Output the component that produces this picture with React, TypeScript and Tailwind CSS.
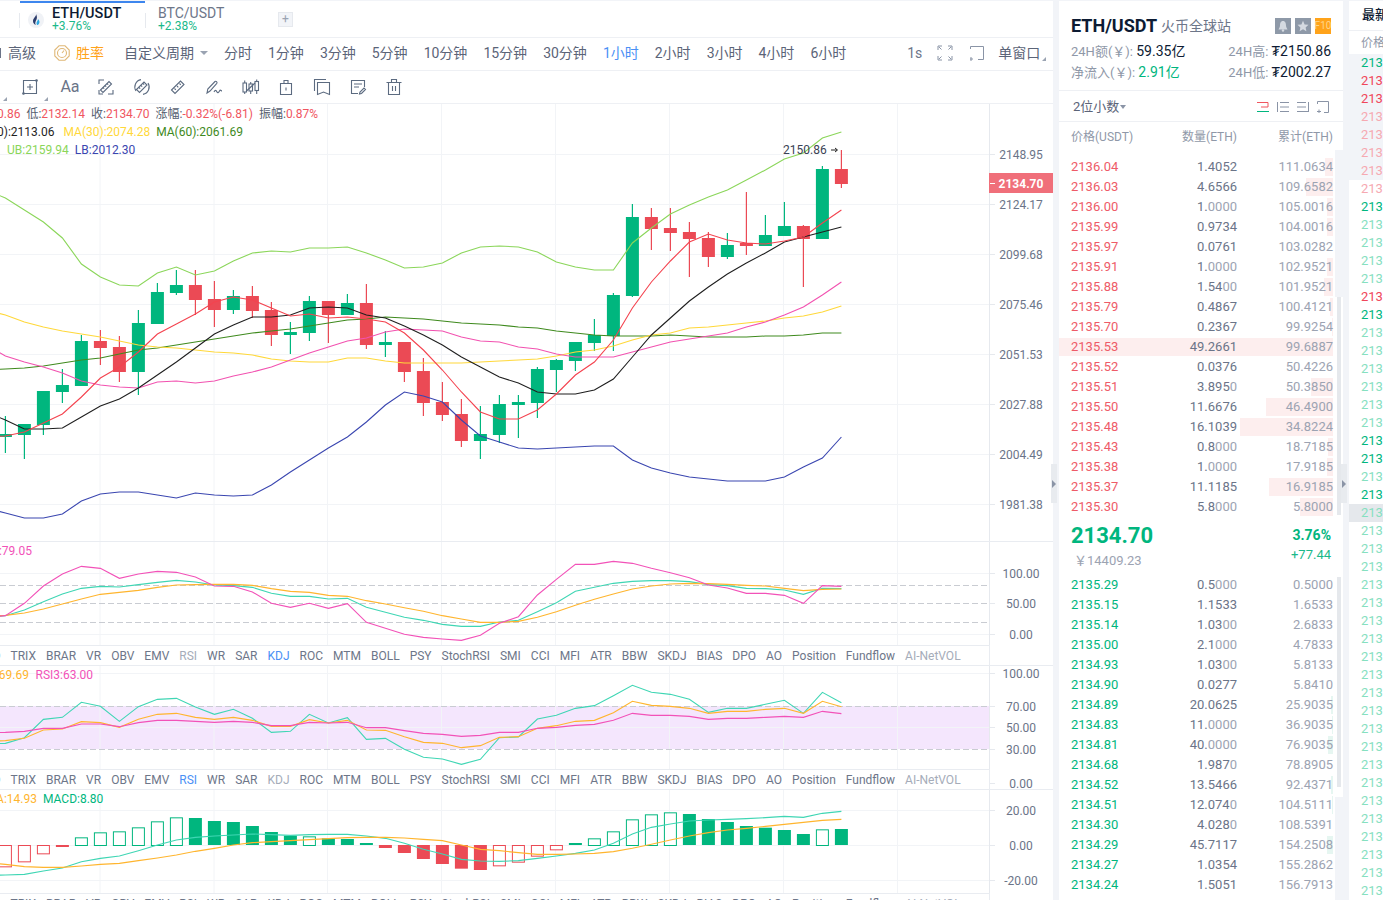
import React from "react";

const GREEN = "#00b67e";
const RED = "#eb4a55";

// x of candle i on the chart
const cx = (i: number) => 5.4 + 19 * i;

// [green?, wickTop, wickBottom, bodyTop, bodyBottom]
const candles: [number, number, number, number, number][] = [
  [1, 416, 453, 434, 437], [1, 424, 459, 424, 435], [1, 391, 435, 391, 425], [1, 369, 403, 385, 392],
  [1, 335, 386, 341, 386], [0, 330, 365, 341, 348], [0, 336, 382, 347, 372], [1, 310, 395, 323, 372],
  [1, 283, 324, 292, 324], [1, 270, 295, 285, 293], [0, 270, 315, 285, 300], [0, 281, 327, 299, 310],
  [1, 290, 314, 296, 310], [0, 286, 318, 296, 311], [0, 302, 346, 310, 335], [1, 322, 354, 332, 335],
  [1, 296, 341, 301, 333], [0, 301, 343, 301, 315], [1, 294, 315, 303, 315], [0, 284, 349, 303, 345],
  [1, 331, 357, 342, 345], [0, 342, 382, 342, 372], [0, 358, 416, 371, 403], [0, 382, 421, 402, 415],
  [0, 399, 447, 414, 441], [1, 406, 459, 434, 441], [1, 395, 443, 404, 435], [1, 395, 438, 402, 405],
  [1, 367, 418, 369, 403], [1, 359, 392, 360, 370], [1, 342, 371, 342, 361], [1, 319, 351, 335, 343],
  [1, 293, 351, 295, 336], [1, 204, 297, 217, 296], [0, 208, 250, 217, 229], [0, 208, 251, 228, 233],
  [0, 222, 277, 232, 239], [0, 232, 267, 238, 257], [1, 233, 259, 245, 257], [0, 192, 255, 243, 246],
  [1, 215, 246, 235, 246], [1, 202, 236, 226, 236], [0, 225, 287, 226, 239], [1, 166, 239, 169, 239],
  [0, 150, 188, 169, 184],
];

const mainLines: { color: string; lead: number; ys: number[] }[] = [
  { color: "#3f8a1e", lead: 370, ys: [369, 368, 366, 363, 360, 358, 354, 350, 348, 345, 342, 339, 336, 333, 331, 329, 326, 323, 320, 319, 317, 318, 319, 321, 323, 324, 325, 327, 328, 331, 333, 335, 336, 336, 336, 335, 336, 337, 337, 337, 336, 336, 335, 333, 333] },
  { color: "#ffd83a", lead: 310, ys: [315, 322, 327, 331, 334, 337, 341, 345, 347, 348, 350, 352, 353, 355, 359, 361, 362, 362, 358, 358, 361, 363, 363, 363, 363, 362, 361, 360, 359, 356, 352, 350, 346, 340, 335, 333, 328, 327, 325, 323, 321, 318, 316, 312, 306] },
  { color: "#f252b0", lead: 345, ys: [356, 362, 367, 373, 381, 385, 387, 388, 382, 381, 383, 381, 376, 372, 367, 360, 353, 347, 341, 338, 332, 329, 330, 331, 337, 341, 342, 347, 349, 354, 357, 357, 357, 352, 347, 342, 339, 336, 333, 327, 322, 315, 307, 295, 282] },
  { color: "#8bd65a", lead: 190, ys: [198, 210, 222, 238, 264, 277, 285, 286, 273, 267, 275, 271, 261, 253, 251, 252, 248, 248, 247, 253, 260, 268, 267, 263, 253, 247, 246, 247, 252, 262, 267, 270, 270, 243, 228, 214, 205, 197, 190, 180, 170, 159, 153, 138, 132] },
  { color: "#3a46b0", lead: 508, ys: [513, 518, 518, 514, 501, 494, 492, 492, 495, 498, 493, 495, 496, 495, 485, 472, 460, 448, 437, 422, 405, 392, 396, 402, 420, 436, 442, 448, 449, 448, 447, 446, 446, 460, 468, 473, 477, 479, 481, 481, 481, 477, 467, 458, 437] },
  { color: "#1f1f1f", lead: 412, ys: [420, 429, 429, 428, 417, 406, 399, 388, 375, 362, 348, 334, 325, 317, 317, 315, 308, 307, 308, 315, 318, 326, 335, 345, 357, 367, 377, 383, 392, 394, 394, 390, 379, 357, 335, 318, 301, 287, 274, 263, 253, 242, 237, 232, 227] },
  { color: "#f4434f", lead: 437, ys: [436, 432, 423, 414, 397, 378, 367, 352, 334, 324, 314, 302, 297, 300, 308, 316, 314, 318, 317, 319, 322, 333, 350, 370, 392, 412, 419, 419, 410, 394, 375, 362, 340, 308, 282, 261, 242, 234, 240, 243, 244, 241, 237, 223, 210] },
];

// indicator series are read off the picture at 3x, z = (y - 530) * 3
const z = (v: number) => 530 + v / 3;

const kdj = {
  k: [257, 240, 215, 192, 175, 169, 171, 164, 157, 151, 156, 165, 167, 172, 190, 199, 199, 207, 205, 232, 247, 262, 271, 283, 289, 289, 276, 271, 245, 218, 184, 172, 160, 154, 152, 152, 155, 164, 167, 175, 176, 180, 193, 175, 176],
  d: [256, 249, 237, 222, 207, 193, 187, 181, 172, 165, 164, 163, 163, 166, 176, 184, 187, 196, 199, 212, 222, 233, 244, 257, 267, 277, 277, 274, 262, 245, 226, 208, 192, 177, 168, 162, 160, 161, 163, 166, 168, 175, 182, 178, 177],
  j: [257, 220, 168, 132, 109, 115, 145, 132, 124, 127, 141, 168, 169, 186, 220, 232, 220, 235, 221, 277, 295, 313, 322, 327, 331, 316, 280, 260, 195, 148, 103, 103, 94, 100, 115, 128, 143, 165, 174, 190, 190, 196, 220, 167, 169],
};

const rsi = {
  a: [640, 623, 568, 562, 517, 529, 574, 530, 508, 505, 531, 553, 538, 565, 607, 604, 553, 579, 563, 628, 625, 658, 682, 687, 703, 688, 623, 621, 567, 556, 535, 527, 497, 466, 487, 493, 508, 547, 535, 535, 523, 511, 550, 487, 518],
  b: [632, 625, 600, 597, 575, 578, 592, 568, 553, 550, 562, 568, 562, 571, 589, 589, 569, 579, 571, 600, 601, 620, 637, 640, 653, 647, 622, 620, 595, 587, 574, 571, 548, 514, 526, 529, 535, 550, 544, 544, 538, 535, 550, 514, 530],
  c: [607, 604, 595, 595, 582, 582, 590, 578, 571, 571, 574, 577, 574, 577, 587, 587, 577, 579, 577, 593, 593, 602, 610, 613, 619, 616, 607, 607, 595, 592, 586, 583, 571, 550, 556, 556, 559, 568, 565, 565, 562, 559, 562, 544, 551],
};

const macd = {
  dif: [1035, 1033, 1023, 1014, 995, 985, 978, 962, 945, 930, 922, 918, 915, 912, 914, 916, 914, 913, 913, 918, 925, 940, 958, 972, 988, 993, 994, 992, 985, 978, 970, 960, 940, 912, 892, 882, 873, 870, 868, 866, 863, 859, 862, 850, 844],
  dea: [1003, 1010, 1012, 1012, 1008, 1003, 1000, 992, 984, 975, 964, 955, 945, 938, 935, 932, 929, 926, 923, 922, 922, 924, 928, 932, 945, 958, 962, 968, 973, 973, 972, 970, 965, 955, 943, 930, 918, 908, 900, 895, 889, 883, 877, 871, 868],
  // [end of bar, hollow?]
  bars: [[1009, 1], [994, 1], [970, 1], [951, 0], [922, 1], [907, 1], [904, 1], [892, 1], [874, 1], [862, 1], [864, 0], [873, 0], [876, 0], [888, 0], [906, 0], [917, 0], [919, 1], [925, 0], [927, 0], [939, 0], [954, 0], [969, 0], [987, 0], [1002, 0], [1016, 0], [1020, 0], [1006, 1], [995, 1], [977, 1], [958, 1], [939, 0], [925, 1], [904, 1], [868, 1], [853, 1], [847, 1], [852, 0], [867, 0], [876, 0], [888, 0], [893, 0], [900, 0], [912, 0], [898, 1], [897, 0]],
};

const tabLabels = ["MACD", "TRIX", "BRAR", "VR", "OBV", "EMV", "RSI", "WR", "SAR", "KDJ", "ROC", "MTM", "BOLL", "PSY", "StochRSI", "SMI", "CCI", "MFI", "ATR", "BBW", "SKDJ", "BIAS", "DPO", "AO", "Position", "Fundflow", "AI-NetVOL"];

const asks: [string, string, string, number][] = [
  ["2136.04", "1.4052", "111.0634", 8], ["2136.03", "4.6566", "109.6582", 27], ["2136.00", "1.0000", "105.0016", 6],
  ["2135.99", "0.9734", "104.0016", 6], ["2135.97", "0.0761", "103.0282", 0], ["2135.91", "1.0000", "102.9521", 6],
  ["2135.88", "1.5400", "101.9521", 9], ["2135.79", "0.4867", "100.4121", 3], ["2135.70", "0.2367", "99.9254", 1],
  ["2135.53", "49.2661", "99.6887", 274], ["2135.52", "0.0376", "50.4226", 0], ["2135.51", "3.8950", "50.3850", 22],
  ["2135.50", "11.6676", "46.4900", 67], ["2135.48", "16.1039", "34.8224", 93], ["2135.43", "0.8000", "18.7185", 5],
  ["2135.38", "1.0000", "17.9185", 6], ["2135.37", "11.1185", "16.9185", 64], ["2135.30", "5.8000", "5.8000", 33],
];

const bids: [string, string, string, number][] = [
  ["2135.29", "0.5000", "0.5000", 0], ["2135.15", "1.1533", "1.6533", 0], ["2135.14", "1.0300", "2.6833", 0],
  ["2135.00", "2.1000", "4.7833", 0], ["2134.93", "1.0300", "5.8133", 0], ["2134.90", "0.0277", "5.8410", 0],
  ["2134.89", "20.0625", "25.9035", 2], ["2134.83", "11.0000", "36.9035", 1], ["2134.81", "40.0000", "76.9035", 5],
  ["2134.68", "1.9870", "78.8905", 0], ["2134.52", "13.5466", "92.4371", 2], ["2134.51", "12.0740", "104.5111", 1],
  ["2134.30", "4.0280", "108.5391", 0], ["2134.29", "45.7117", "154.2508", 6], ["2134.27", "1.0354", "155.2862", 0],
  ["2134.24", "1.5051", "156.7913", 0],
];

function Line({ ys, color, lead, toY = (v: number) => v }: { ys: number[]; color: string; lead?: number; toY?: (v: number) => number }) {
  const pts = ys.map((v, i) => `${cx(i)},${toY(v)}`);
  if (lead !== undefined) pts.unshift(`${cx(-1)},${toY(lead)}`);
  return <polyline points={pts.join(" ")} fill="none" stroke={color} strokeWidth={1.1} />;
}

function Grid({ top, bottom, hs, labels, dashed = [] }: { top: number; bottom: number; hs: number[]; labels: [string, number][]; dashed?: number[] }) {
  return (
    <g>
      {[100, 214, 327.5, 441.5, 555.5, 669.5, 783.5, 897.5].map((x) => (
        <line key={x} x1={x} x2={x} y1={top} y2={bottom} stroke="#f2f4f7" />
      ))}
      {hs.map((y) => (
        <line key={y} x1={0} x2={989} y1={y + 0.5} y2={y + 0.5} stroke="#f2f4f7" />
      ))}
      {dashed.map((y) => (
        <line key={y} x1={0} x2={989} y1={y + 0.5} y2={y + 0.5} stroke="#c9ccd2" strokeDasharray="6 3" />
      ))}
      <line x1={989.5} x2={989.5} y1={top} y2={bottom} stroke="#e6e9ee" />
      {labels.map(([t, y]) => (
        <g key={t}>
          <line x1={990} x2={995} y1={y + 0.5} y2={y + 0.5} stroke="#e6e9ee" />
          <text x={1021} y={y + 4.5} textAnchor="middle" fontSize={12} fill="#6b7488">
            {t}
          </text>
        </g>
      ))}
    </g>
  );
}

function TabRow({ active, muted }: { active: string; muted: string }) {
  return (
    <div className="flex h-5 w-[990px] items-center gap-[10px] overflow-hidden border-t border-r border-[#e9ecf1] text-xs whitespace-nowrap text-[#6d7689]">
      {tabLabels.map((t, i) => (
        <span
          key={t}
          className={
            (i === 0 ? "ml-[-33.5px] " : "") +
            (t === active ? "text-[#4a90f5]" : t === muted || t === "AI-NetVOL" ? "text-[#a5acb9]" : "")
          }
        >
          {t}
        </span>
      ))}
    </div>
  );
}

function MainChart() {
  const labels: [string, number][] = [
    ["2148.95", 154], ["2124.17", 204], ["2099.68", 254], ["2075.46", 304],
    ["2051.53", 354], ["2027.88", 404], ["2004.49", 454], ["1981.38", 504],
  ];
  return (
    <svg width={1053} height={437} className="block">
      <g transform="translate(0 -104)">
        <Grid top={104} bottom={541} hs={[154, 204, 254, 304, 354, 404, 454, 504]} labels={labels} />
        {candles.map(([up, wt, wb, bt, bb], i) => {
          const c = up ? GREEN : RED;
          return (
            <g key={i}>
              <line x1={cx(i)} x2={cx(i)} y1={wt} y2={wb} stroke={c} strokeWidth={1.2} />
              <rect x={cx(i) - 6.5} y={bt} width={13} height={bb - bt} fill={c} />
            </g>
          );
        })}
        {mainLines.map((l) => (
          <Line key={l.color} ys={l.ys} color={l.color} lead={l.lead} />
        ))}
        <text x={783} y={154} fontSize={12} fill="#3a4254">
          2150.86
        </text>
        <path d="M831 150h6M835 148l2.5 2-2.5 2" fill="none" stroke="#222" strokeWidth={1} />
        <rect x={989} y={173} width={64} height={20} fill="#f06f7a" />
        <line x1={990} x2={995} y1={183.5} y2={183.5} stroke="#fff" />
        <text x={1021} y={188} textAnchor="middle" fontSize={12} fontWeight={700} fill="#fff">
          2134.70
        </text>
      </g>
    </svg>
  );
}

function KdjPanel() {
  const labels: [string, number][] = [["100.00", 573], ["50.00", 603], ["0.00", 634]];
  return (
    <svg width={1053} height={103} className="block">
      <g transform="translate(0 -542)">
        <Grid top={542} bottom={645} hs={[573, 634]} labels={labels} dashed={[585, 603, 622]} />
        <Line ys={kdj.k} color="#3fd6b4" toY={z} lead={262} />
        <Line ys={kdj.d} color="#ffb52e" toY={z} lead={259} />
        <Line ys={kdj.j} color="#f252b8" toY={z} lead={262} />
        <text x={32} y={555} textAnchor="end" fontSize={12} fill="#f252b8">
          J:79.05
        </text>
      </g>
    </svg>
  );
}

function RsiPanel() {
  const labels: [string, number][] = [["100.00", 673], ["70.00", 706], ["50.00", 727], ["30.00", 749], ["0.00", 783]];
  return (
    <svg width={1053} height={103} className="block overflow-visible">
      <g transform="translate(0 -666)">
        <rect x={0} y={706} width={989} height={43} fill="#f4e6fd" />
        <Grid top={666} bottom={769} hs={[673, 727]} labels={labels} dashed={[706, 749]} />
        <Line ys={rsi.a} color="#3fd6b4" toY={z} lead={642} />
        <Line ys={rsi.b} color="#ffb52e" toY={z} lead={634} />
        <Line ys={rsi.c} color="#f252b8" toY={z} lead={608} />
        <text x={29} y={679} textAnchor="end" fontSize={12} fill="#ffb52e">
          RSI2:69.69
        </text>
        <text x={35.5} y={679} fontSize={12} fill="#f252b8">
          RSI3:63.00
        </text>
      </g>
    </svg>
  );
}

function MacdPanel() {
  const labels: [string, number][] = [["20.00", 810], ["0.00", 845], ["-20.00", 880]];
  return (
    <svg width={1053} height={103} className="block">
      <g transform="translate(0 -790)">
        <Grid top={790} bottom={893} hs={[810, 845, 880]} labels={labels} />
        {macd.bars.map(([end, hollow], i) => {
          const y = z(end);
          const base = 845;
          const c = end > 945 ? RED : GREEN;
          const t = Math.min(y, base);
          const h = Math.abs(y - base);
          return hollow ? (
            <rect key={i} x={cx(i) - 6} y={t + 0.5} width={12} height={h} fill="#fff" stroke={c} />
          ) : (
            <rect key={i} x={cx(i) - 6.5} y={t} width={13} height={h} fill={c} />
          );
        })}
        <Line ys={macd.dif} color="#3fd6b4" toY={z} lead={1036} />
        <Line ys={macd.dea} color="#ffb52e" toY={z} lead={998} />
        <text x={37} y={803} textAnchor="end" fontSize={12} fill="#ffb52e">
          DEA:14.93
        </text>
        <text x={43} y={803} fontSize={12} fill={GREEN}>
          MACD:8.80
        </text>
      </g>
    </svg>
  );
}

const Tri = () => (
  <svg width={4} height={4} className="absolute right-0 bottom-[2px]">
    <polygon points="4,0 4,4 0,4" fill="#9aa3b2" />
  </svg>
);

// toolbar icons, all 18x18 with the same stroke
const iconProps = {
  width: 18,
  height: 18,
  viewBox: "0 0 18 18",
  fill: "none",
  stroke: "#5c6b80",
  strokeWidth: 1.1,
};

const toolIcons = [
  // ruler in corner brackets
  <svg key="a" {...iconProps}>
    <path d="M2 6V2h5M16 12v4h-5" />
    <path d="M3.5 12 12 3.5l2.5 2.5L6 14.5z" />
    <path d="M6 9.5l1.2 1.2M8 7.5l1.2 1.2M10 5.5l1.2 1.2" />
    <path d="M2 12v4h4" />
  </svg>,
  // ruler in a circle
  <svg key="b" {...iconProps}>
    <path d="M3 13A7.5 7.5 0 0 1 8 1.6M10 16.4A7.5 7.5 0 0 0 15 5" />
    <path d="M3.5 11.5 11 4l3 3-7.500 7.500z" />
    <path d="M6 9.500l1.200 1.200M8 7.500l1.200 1.200M10 5.500l1.200 1.200" />
  </svg>,
  <svg key="c" {...iconProps}>
    <path d="M2.500 12 11.500 3l3.500 3.500-9 9z" />
    <path d="M5.500 10.500l1.300 1.300M8 8l1.300 1.300M10.500 5.500l1.300 1.300" />
  </svg>,
  <svg key="d" {...iconProps} width={20}>
    <path d="M2 15l.8-4L10 3.500c1-.8 2.600.8 1.800 1.800L5 13z" />
    <path d="M9 14c1.500-3 2.500-1 3 0s1.500 1 2.500-1 1.500 0 2.500 0" />
  </svg>,
  <svg key="e" {...iconProps} width={20}>
    <rect x={2} y={5} width={3.500} height={9} />
    <path d="M3.700 2.500V5M3.700 14v2" />
    <rect x={8} y={6} width={3.500} height={7} />
    <path d="M9.700 4v2M9.700 13v3" />
    <rect x={14} y={3.500} width={3.500} height={9} />
    <path d="M15.700 1.500v2M15.700 12.500v3.500" />
    <path d="M5.500 13 14 5" />
  </svg>,
  <svg key="f" {...iconProps}>
    <path d="M3.500 5.500h11v11h-11z" />
    <path d="M7 5.500V2.500h4v3M9 9.500v3" />
  </svg>,
  <svg key="g" {...iconProps}>
    <path d="M1.500 13V1.500H13" />
    <path d="M4.500 4.500h12v12l-6-2.500-6 2.500z" />
  </svg>,
  <svg key="h" {...iconProps}>
    <path d="M9 15.500H2.500v-13h13V9" />
    <path d="M5 6h8M5 9h5" />
    <path d="M10.500 16l.5-2 4-4 1.500 1.500-4 4z" />
  </svg>,
  <svg key="i" {...iconProps}>
    <path d="M1.500 4.500h15M3.500 4.500v12h11v-12M6.500 4.500v-3h5v3M7.500 8v5M10.500 8v5" />
  </svg>,
];

const Qty = ({ v }: { v: string }) => {
  const m = v.match(/^(.*?)(0*)$/)!;
  return (
    <span className="text-[#6b7488]">
      {m[1]}
      <span className="text-[#9ca3b2]">{m[2]}</span>
    </span>
  );
};

function BookRow({ row, color, bar }: { row: [string, string, string, number]; color: string; bar: string }) {
  return (
    <div className="relative flex h-5 items-center pr-[10px] pl-3 text-[13px]">
      {row[3] > 0 && <div className={"absolute top-[1px] right-[10px] bottom-[1px] " + bar} style={{ width: row[3] }} />}
      <span className="relative w-[70px]" style={{ color }}>
        {row[0]}
      </span>
      <span className="relative w-[96px] text-right">
        <Qty v={row[1]} />
      </span>
      <span className="relative flex-1 text-right text-[#9ca3b2]">{row[2]}</span>
    </div>
  );
}

const tradeTone = "grrLLLLLgGGGGrgGGGGGGggGgG";
const toneClass: Record<string, string> = {
  g: "text-[#00b67e]",
  r: "text-[#f0465a]",
  L: "text-[#f6a9b1]",
  G: "text-[#86e0c0]",
};

export default function App() {
  return (
    <div className="flex h-[900px] w-[1383px] overflow-hidden bg-[#f2f4f8] pt-px [font-family:Roboto,'Noto_Sans_CJK_SC',sans-serif]">
      {/* chart column */}
      <div className="relative flex w-[1053px] shrink-0 flex-col bg-white">
        <div className="flex h-[37px] shrink-0 items-stretch border-b border-[#eef0f4]">
          <div className="ml-5 flex w-[125px] items-center gap-2 border-t-2 border-[#3d86ee]">
            <span className="-ml-px h-[15px] w-px bg-[#e6e9ee]" />
            <span className="flex h-4 w-4 items-center justify-center rounded-full bg-[#f0f2f6]">
              <svg width={10} height={12} viewBox="0 0 10 12">
                <path d="M5 0c.5 2.500-3 4-3 7 0 2 1.300 3.500 3 4-1-1-1-2.500 0-4.500C6 5 6.500 3 5 0z" fill="#2b3a6a" />
                <path d="M7 5c.3 1.500-1.700 2.500-1.500 4.500.1 1 .8 1.500 1.300 1.500C8.500 10 9.500 7.500 7 5z" fill="#2ca6e0" />
              </svg>
            </span>
            <div className="flex flex-col">
              <span className="text-[14.5px] leading-[13px] font-medium text-[#0d1b33]">ETH/USDT</span>
              <span className="text-xs leading-[13px] text-[#1bb98a]">+3.76%</span>
            </div>
          </div>
          <div className="flex w-[133px] items-center pt-[2px]">
            <span className="h-[15px] w-px bg-[#e6e9ee]" />
            <div className="ml-3 flex flex-col">
              <span className="text-sm leading-[13px] text-[#6d7689]">BTC/USDT</span>
              <span className="text-xs leading-[13px] text-[#1bb98a]">+2.38%</span>
            </div>
          </div>
          <div className="flex items-center">
            <span className="flex h-[15px] w-[15px] items-center justify-center border border-[#e6e9ee] bg-[#f2f4f8] text-xs leading-none text-[#9aa3b2]">
              +
            </span>
          </div>
        </div>

        <div className="flex h-[33px] shrink-0 items-center border-b border-[#eef0f4] pb-[2px] text-sm whitespace-nowrap text-[#5b6478]">
          <span className="h-2.5 w-px bg-[#6b7488]" />
          <span className="ml-[7px]">高级</span>
          <svg width={16} height={16} viewBox="0 0 16 16" className="ml-[18px]" fill="none" stroke="#e0b877" strokeWidth={1.1}>
            <path d="M5 .8h6L15.200 5v6L11 15.200H5L.8 11V5z" />
            <circle cx={8} cy={8} r={4.500} />
            <path d="M8 8l2-2.500" />
          </svg>
          <span className="ml-[6px] text-[#ffa31a]">胜率</span>
          <span className="ml-5">自定义周期</span>
          <svg width={8} height={4} className="mr-4 ml-[6px]">
            <polygon points="0,0 8,0 4,4" fill="#9aa3b2" />
          </svg>
          <div className="flex gap-4">
            {["分时", "1分钟", "3分钟", "5分钟", "10分钟", "15分钟", "30分钟", "1小时", "2小时", "3小时", "4小时", "6小时"].map((p) => (
              <span key={p} className={p === "1小时" ? "text-[#4a90f5]" : ""}>
                {p}
              </span>
            ))}
          </div>
          <span className="ml-[61px] text-[#6d7689]">1s</span>
          <svg width={16} height={16} viewBox="0 0 16 16" className="ml-[15px]" fill="none" stroke="#8a94a6" strokeWidth={1}>
            <path d="M1 5V1h4M11 1h4v4M15 11v4h-4M5 15H1v-4M2 2l2.500 2.500M14 2l-2.500 2.500M14 14l-2.500-2.500M2 14l2.500-2.500" />
          </svg>
          <svg width={14} height={15} viewBox="0 0 14 15" className="ml-[17px]" fill="none" stroke="#8a94a6" strokeWidth={1}>
            <path d="M.5 3V.5h13v13H8M1 11v4M-1 13h4" />
          </svg>
          <span className="ml-[14px]">单窗口</span>
          <svg width={4} height={4} className="mt-3 ml-[2px]">
            <polygon points="4,0 4,4 0,4" fill="#9aa3b2" />
          </svg>
        </div>

        <div className="flex h-[33px] shrink-0 items-center border-b border-[#eef0f4] pl-3">
          <div className="relative -ml-[6px] flex h-full w-[1px]">
            <Tri />
          </div>
          <div className="relative ml-[5px] flex h-full w-9 items-center justify-center">
            <svg {...iconProps}>
              <path d="M2.500 2.500h13v13h-13zM9 6v6M6 9h6" />
              <circle cx={2.500} cy={15.500} r={0.8} fill="#5c6b80" />
              <circle cx={15.500} cy={2.500} r={0.8} fill="#5c6b80" />
            </svg>
            <Tri />
          </div>
          <span className="ml-1 flex w-9 justify-center text-base text-[#6b7488]">Aa</span>
          {toolIcons.map((icon) => (
            <div key={icon.key} className="flex h-full w-9 items-center justify-center">
              {icon}
            </div>
          ))}
        </div>

        <div className="relative h-[438px] shrink-0 border-b border-[#e9ecf1]">
          <MainChart />
          <div className="absolute top-px left-0 flex w-[980px] flex-col gap-0 overflow-hidden text-xs leading-[18px] whitespace-nowrap">
            <div className="ml-[-3px] flex gap-[6px] text-[#f0565f]">
              <span>0.86</span>
              <span>
                <span className="text-[#555e70]">低:</span>2132.14
              </span>
              <span>
                <span className="text-[#555e70]">收:</span>2134.70
              </span>
              <span>
                <span className="text-[#555e70]">涨幅:</span>-0.32%(-6.81)
              </span>
              <span>
                <span className="text-[#555e70]">振幅:</span>0.87%
              </span>
            </div>
            <div className="flex">
              <span className="ml-[-3px] text-[#1f1f1f]">0):2113.06</span>
              <span className="ml-[9px] text-[#ffd83a]">MA(30):2074.28</span>
              <span className="ml-[6px] text-[#3f8a1e]">MA(60):2061.69</span>
            </div>
            <div className="ml-[7px] flex gap-[6px]">
              <span className="text-[#8bd65a]">UB:2159.94</span>
              <span className="text-[#3a46b0]">LB:2012.30</span>
            </div>
          </div>
        </div>

        <div className="shrink-0 border-b border-[#e9ecf1]">
          <KdjPanel />
          <TabRow active="KDJ" muted="RSI" />
        </div>
        <div className="shrink-0 border-b border-[#e9ecf1]">
          <RsiPanel />
          <TabRow active="RSI" muted="KDJ" />
        </div>
        <div className="shrink-0">
          <MacdPanel />
          <TabRow active="" muted="" />
        </div>

        <div className="absolute top-[463px] right-[-4px] flex h-[39px] w-[6px] items-center justify-center bg-[#e8ebef]">
          <svg width={4} height={8}>
            <polygon points="0,0 4,4 0,8" fill="#8a94a6" />
          </svg>
        </div>
      </div>

      {/* order book */}
      <div className="relative ml-[6px] flex w-[284px] shrink-0 flex-col bg-white">
        <div className="h-[90px] shrink-0 border-b border-[#eef0f4] px-3 pt-[13px]">
          <div className="flex items-center">
            <span className="text-lg leading-6 font-bold text-[#0d1b33]">ETH/USDT</span>
            <span className="ml-1 text-sm text-[#6d7689]">火币全球站</span>
            <div className="mr-0 ml-auto flex gap-1">
              <span className="flex h-4 w-4 items-center justify-center bg-[#8e99a8]">
                <svg width={12} height={12} viewBox="0 0 12 12">
                  <path d="M6 1C3.500 1 3 3.500 3 5.500 3 7.500 1.500 9 1.500 9.500h9C10.500 9 9 7.500 9 5.500 9 3.500 8.500 1 6 1z" fill="#d5dae1" />
                  <circle cx={6} cy={10.500} r={1.200} fill="#d5dae1" />
                </svg>
              </span>
              <span className="flex h-4 w-4 items-center justify-center bg-[#8e99a8]">
                <svg width={12} height={12} viewBox="0 0 12 12">
                  <polygon points="6,.8 7.600,4.400 11.500,4.800 8.600,7.400 9.400,11.200 6,9.200 2.600,11.200 3.400,7.400 .5,4.800 4.400,4.400" fill="#d5dae1" />
                </svg>
              </span>
              <span className="flex h-4 w-4 items-center justify-center bg-[#ffa31a] text-[10px] leading-none text-[#ffd48a]">F10</span>
            </div>
          </div>
          <div className="mt-[3px] flex justify-between text-[13px] leading-5 whitespace-nowrap text-[#8f98a8]">
            <div>
              <div>
                24H额(￥): <span className="text-sm text-[#0d1b33]">59.35亿</span>
              </div>
              <div>
                净流入(￥): <span className="text-sm text-[#00b67e]">2.91亿</span>
              </div>
            </div>
            <div className="text-right">
              <div>
                24H高: <span className="text-sm text-[#0d1b33]">₮2150.86</span>
              </div>
              <div>
                24H低: <span className="text-sm text-[#0d1b33]">₮2002.27</span>
              </div>
            </div>
          </div>
        </div>

        <div className="flex h-[31px] shrink-0 items-center border-b border-[#eef0f4] pt-px pr-[14px] pl-[14px] text-xs text-[#5b6478]">
          <span className="text-[13px]">2位小数</span>
          <svg width={6} height={4} className="ml-px">
            <polygon points="0,0 6,0 3,4" fill="#8a94a6" />
          </svg>
          <div className="ml-auto flex gap-2">
            <svg width={12} height={12} viewBox="0 0 12 12" fill="none">
              <path d="M0 1.500h11M11 1.500v4.500M4 6h7" stroke="#f0565f" />
              <path d="M0 10.500h12" stroke="#00b67e" />
            </svg>
            <svg width={12} height={12} viewBox="0 0 12 12" fill="none" stroke="#8a94a6">
              <path d="M.5 1v10M3 1.500h9M3 6h9M3 10.500h9" />
            </svg>
            <svg width={12} height={12} viewBox="0 0 12 12" fill="none" stroke="#8a94a6">
              <path d="M0 1.500h9M0 6h9M0 10.500h12M11.500 1v10" />
            </svg>
            <svg width={12} height={12} viewBox="0 0 12 12" fill="none" stroke="#8a94a6">
              <path d="M.5 3V.5h11v11H7M2 8.500v3.500M0 10.500h4" />
            </svg>
          </div>
        </div>

        <div className="flex h-7 shrink-0 items-center pt-[2px] pr-[10px] pl-3 text-xs text-[#8f98a8]">
          <span className="w-[70px] whitespace-nowrap">价格(USDT)</span>
          <span className="w-[96px] text-right">数量(ETH)</span>
          <span className="flex-1 text-right">累计(ETH)</span>
        </div>

        <div className="relative h-[367px] shrink-0 pt-[7px]">
          {asks.map((r) => (
            <BookRow key={r[0]} row={r} color="#ee5b68" bar="bg-[#fdeeee]" />
          ))}
        </div>

        <div className="flex h-[58px] shrink-0 items-start pr-3 pl-3">
          <div>
            <div className="text-[22px] leading-[38px] font-bold text-[#00b67e]">2134.70</div>
            <div className="mt-[-4px] ml-[3px] text-[13px] leading-5 text-[#9ca3b2]">￥14409.23</div>
          </div>
          <div className="ml-auto pt-[10px] text-right">
            <div className="text-sm leading-4 font-bold text-[#00b67e]">3.76%</div>
            <div className="mt-[2px] text-[13px] leading-5 text-[#1bb98a]">+77.44</div>
          </div>
        </div>

        <div className="relative flex-1 overflow-hidden">
          {bids.map((r) => (
            <BookRow key={r[0]} row={r} color="#00b67e" bar="bg-[#e6f6f1]" />
          ))}
        </div>

        {/* scroll tracks over the book */}
        <div className="absolute top-[149px] right-0 flex h-[751px] w-2 flex-col bg-[#f2f4f8]">
          <div className="mt-[147px] h-[218px] bg-white pl-[2px]">
            <div className="h-full w-1 bg-[#e5e8ec]" />
          </div>
          <div className="h-[62px] bg-white" />
          <div className="h-[220px] bg-white pl-[2px]">
            <div className="h-[210px] w-1 bg-[#e5e8ec]" />
          </div>
        </div>
        <div className="absolute top-[463px] right-[-4px] flex h-[39px] w-[6px] items-center justify-center bg-[#e8ebef]">
          <svg width={4} height={8}>
            <polygon points="0,0 4,4 0,8" fill="#8a94a6" />
          </svg>
        </div>
      </div>

      {/* latest trades, cut off by the window */}
      <div className="ml-[6px] flex w-[34px] shrink-0 flex-col overflow-hidden bg-white text-[13px] whitespace-nowrap">
        <div className="flex h-[30px] shrink-0 items-center border-b border-[#eef0f4] pb-[2px] pl-[13px] font-medium text-[#0d1b33]">最新成交</div>
        <div className="flex h-[23px] shrink-0 items-center pl-3 text-xs text-[#8f98a8]">价格(USDT)</div>
        {Array.from({ length: 47 }).map((_, k) => (
          <div
            key={k}
            className={
              "flex h-[18px] shrink-0 items-center pl-3 " +
              (toneClass[tradeTone[k] ?? "G"] + " ") +
              (k < 7 ? "bg-[#f2f4f8]" : k === 25 ? "bg-[#e5e8ec]" : "")
            }
          >
            2135.2
          </div>
        ))}
      </div>
    </div>
  );
}
